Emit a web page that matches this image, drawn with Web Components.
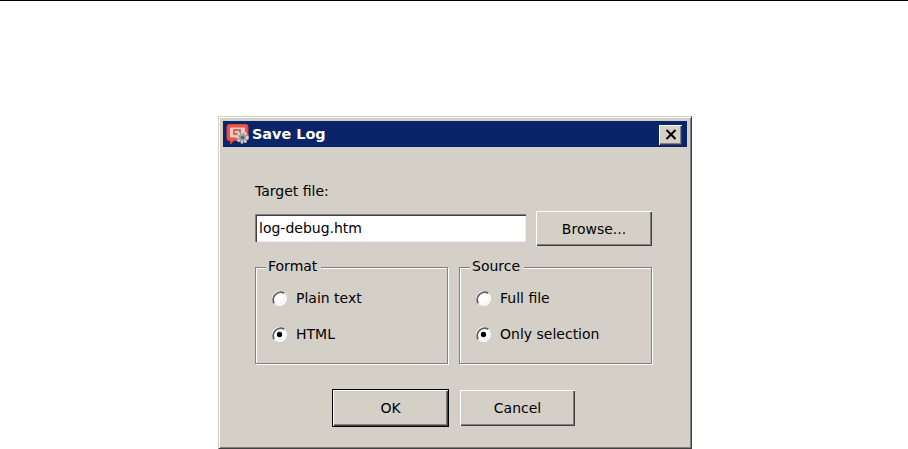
<!DOCTYPE html>
<html>
<head>
<meta charset="utf-8">
<title>Save Log</title>
<style>
  html, body { margin: 0; background: #fff; }
  body { font: 14px "DejaVu Sans", sans-serif; }
</style>
</head>
<body>
<log-page>
  <save-dialog caption="Save Log">
    <div slot="target">
      <file-field label="Target file:" value="log-debug.htm"></file-field>
    </div>
    <radio-group slot="format" legend="Format" style="width:193px">
      <radio-option label="Plain text"></radio-option>
      <radio-option label="HTML" checked></radio-option>
    </radio-group>
    <radio-group slot="source" legend="Source" style="width:193px">
      <radio-option label="Full file"></radio-option>
      <radio-option label="Only selection" checked></radio-option>
    </radio-group>
    <win-button slot="ok" default style="width:117px;height:38px">OK</win-button>
    <win-button slot="cancel" style="width:115px;height:36px">Cancel</win-button>
  </save-dialog>
</log-page>

<script>
const FONT = `"DejaVu Sans", sans-serif`;

class LogPage extends HTMLElement {
  connectedCallback() {
    if (this.shadowRoot) return;
    this.attachShadow({ mode: "open" }).innerHTML = `<style>
      :host { display: block; width: 908px; height: 449px; overflow: hidden; box-sizing: border-box; border-top: 1px solid #000; padding: 115px 0 0 218px; }
    </style><slot></slot>`;
  }
}

class SaveDialog extends HTMLElement {
  connectedCallback() {
    if (this.shadowRoot) return;
    const caption = this.getAttribute("caption");
    this.attachShadow({ mode: "open" }).innerHTML = `<style>
      :host {
        display: block; box-sizing: border-box; width: 474px; height: 333px;
        background: #d4d0c8; color: #000; padding: 4px 4px 0 4px;
        border: 1px solid; border-color: #d4d0c8 #404040 #404040 #d4d0c8;
        box-shadow: inset 1px 1px 0 #fff, inset -1px -1px 0 #808080;
        font: 14px ${FONT};
      }
      .title { display: flex; align-items: center; height: 26px; background: #0a246a; padding: 0 5px 0 3px; color: #fff; font-weight: bold; font-size: 14.4px; }
      .title span { flex: 1; }
      .close { width: 23px; height: 20px; margin-top: 1px; box-sizing: border-box; background: #d4d0c8; box-shadow: inset 1px 1px 0 #fff, inset -1px -1px 0 #404040, inset -2px -2px 0 #808080; display: flex; align-items: center; justify-content: center; }
      .body { padding: 36px 32px 0 32px; }
      .row { display: flex; gap: 11px; }
      .buttons { display: flex; gap: 11px; align-items: center; margin: 25px 0 0 77px; }
    </style>
    <div class="title">
      <svg width="26" height="24" viewBox="0 0 26 24">
        <path d="M3 2.500h17a2 2 0 0 1 2 2v12a2 2 0 0 1-2 2H8l-3.500 3.500v-3.500H3a2 2 0 0 1-2-2v-12a2 2 0 0 1 2-2z" fill="#e8564a" stroke="#d04a3e"/>
        <rect x="4" y="5.500" width="15" height="10" rx="1" fill="#f3c7bc"/>
        <path d="M8 8h6v4H8z" fill="none" stroke="#c0504a" stroke-width="1.500"/>
        <circle cx="16.500" cy="15.500" r="5" fill="#a0a0a0" stroke="#d8d8d8" stroke-width="2.400" stroke-dasharray="2.200 1.400"/>
        <circle cx="16.500" cy="15.500" r="1.800" fill="#606060"/>
      </svg>
      <span>${caption}</span>
      <div class="close"><svg width="12" height="11" viewBox="0 0 12 11"><path d="M1.500 1l9 9M10.500 1l-9 9" stroke="#000" stroke-width="2"/></svg></div>
    </div>
    <div class="body">
      <slot name="target"></slot>
      <div class="row">
        <slot name="format"></slot>
        <slot name="source"></slot>
      </div>
      <div class="buttons">
        <slot name="ok"></slot>
        <slot name="cancel"></slot>
      </div>
    </div>`;
  }
}

class FileField extends HTMLElement {
  connectedCallback() {
    if (this.shadowRoot) return;
    this.attachShadow({ mode: "open" }).innerHTML = `<style>
      :host { display: block; margin-bottom: 21px; }
      .label { margin: 0 0 12px 0; line-height: 16px; height: 16px; }
      .row { display: flex; gap: 10px; align-items: flex-start; }
      .input { width: 271px; height: 28px; box-sizing: border-box; background: #fff; padding: 5px 0 0 4px; line-height: 18px; box-shadow: inset 1px 1px 0 #808080, inset 2px 2px 0 #404040, inset -1px -1px 0 #eee; margin-top: 3px; }
    </style>
    <div class="label">${this.getAttribute("label")}</div>
    <div class="row">
      <div class="input">${this.getAttribute("value")}</div>
      <win-button style="width:116px;height:35px">Browse...</win-button>
    </div>`;
  }
}

class RadioGroup extends HTMLElement {
  connectedCallback() {
    if (this.shadowRoot) return;
    this.attachShadow({ mode: "open" }).innerHTML = `<style>
      :host { display: block; box-sizing: border-box; height: 97px; border: 1px solid #808080; box-shadow: 1px 1px 0 #fff, inset 1px 1px 0 #fff; position: relative; padding: 22px 0 0 15px; }
      .legend { position: absolute; top: -10px; left: 10px; background: #d4d0c8; padding: 0 4px 0 2px; line-height: 16px; }
      .list { display: flex; flex-direction: column; gap: 20px; }
    </style>
    <div class="legend">${this.getAttribute("legend")}</div>
    <div class="list"><slot></slot></div>`;
  }
}

class RadioOption extends HTMLElement {
  connectedCallback() {
    if (this.shadowRoot) return;
    const dot = this.hasAttribute("checked") ? `<circle cx="8" cy="8" r="2.500" fill="#000"/>` : "";
    this.attachShadow({ mode: "open" }).innerHTML = `<style>
      :host { display: flex; align-items: center; gap: 8px; height: 16px; line-height: 16px; }
      svg { flex: none; }
    </style>
    <svg width="17" height="17" viewBox="0 0 16 16">
      <circle cx="8" cy="8" r="7" fill="#fff"/>
      <path d="M12.500 3A7 7 0 0 0 3 12.500" fill="none" stroke="#606060" stroke-width="1.600"/>
      <path d="M3.500 12.800A7 7 0 0 0 12.800 3.500" fill="none" stroke="#f4f2ee" stroke-width="1.400"/>
      ${dot}
    </svg>
    <span>${this.getAttribute("label")}</span>`;
  }
}

class WinButton extends HTMLElement {
  connectedCallback() {
    if (this.shadowRoot) return;
    const outline = this.hasAttribute("default") ? "border: 1px solid #000;" : "";
    this.attachShadow({ mode: "open" }).innerHTML = `<style>
      :host { display: flex; flex: none; box-sizing: border-box; ${outline} }
      div { flex: 1; display: flex; align-items: center; justify-content: center; background: #d4d0c8; box-shadow: inset 1px 1px 0 #fff, inset -1px -1px 0 #404040, inset -2px -2px 0 #808080; }
    </style><div><slot></slot></div>`;
  }
}

customElements.define("log-page", LogPage);
customElements.define("save-dialog", SaveDialog);
customElements.define("file-field", FileField);
customElements.define("radio-group", RadioGroup);
customElements.define("radio-option", RadioOption);
customElements.define("win-button", WinButton);
</script>
</body>
</html>
